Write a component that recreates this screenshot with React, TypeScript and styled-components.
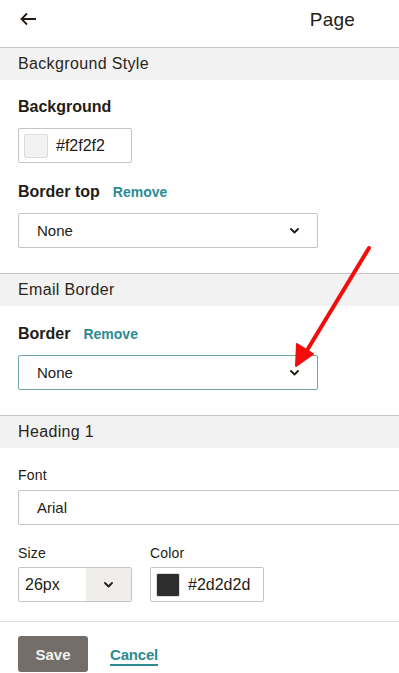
import * as React from "react";
import styled, { createGlobalStyle } from "styled-components";

const GlobalStyle = createGlobalStyle`
  html, body {
    margin: 0;
    padding: 0;
    background: #ffffff;
    overflow: hidden;
  }
  body {
    font-family: "Liberation Sans", Helvetica, Arial, sans-serif;
    color: #241c15;
  }
`;

const Page = styled.div`
  position: relative;
  width: 399px;
  height: 673px;
  overflow: hidden;
`;

const TopBar = styled.div`
  display: flex;
  align-items: center;
  height: 47px;
  padding: 0 44px 0 20px;
`;

const BackButton = styled.button`
  display: flex;
  align-items: center;
  padding: 0;
  border: 0;
  background: none;
  color: #241c15;
  cursor: pointer;
  margin-top: -10px;
`;

const Title = styled.div`
  margin-left: auto;
  margin-top: -8px;
  font-size: 19px;
  letter-spacing: 0.2px;
`;

const SectionHeader = styled.div`
  display: flex;
  align-items: center;
  height: 32px;
  padding: 0 18px;
  border-top: 1px solid #c6c6c6;
  background: #f2f2f2;
  font-size: 16px;
  letter-spacing: 0.35px;
  color: #2b2520;
`;

const SectionBody = styled.div<{ $top?: number; $bottom?: number; $gap?: number }>`
  display: flex;
  flex-direction: column;
  gap: ${(p) => p.$gap ?? 16}px;
  padding: ${(p) => p.$top ?? 15}px 18px ${(p) => p.$bottom ?? 25}px;
`;

const Field = styled.div<{ $gap?: number }>`
  display: flex;
  flex-direction: column;
  gap: ${(p) => p.$gap ?? 13}px;
`;

const LabelRow = styled.div`
  display: flex;
  align-items: baseline;
  gap: 13px;
  height: 20px;
`;

const FieldLabel = styled.div`
  font-size: 16px;
  font-weight: 700;
  line-height: 20px;
`;

const SmallLabel = styled.div`
  font-size: 14px;
  line-height: 18px;
  letter-spacing: 0.2px;
`;

const RemoveLink = styled.a`
  font-size: 14px;
  font-weight: 700;
  color: #2d8a93;
  cursor: pointer;
`;

const InputBox = styled.div<{ $width?: number; $focused?: boolean }>`
  display: flex;
  align-items: center;
  box-sizing: border-box;
  width: ${(p) => p.$width ?? 114}px;
  height: 35px;
  border: 1px solid ${(p) => (p.$focused ? "#6ea6ab" : "#c4c4c4")};
  border-radius: 2px;
  background: #ffffff;
  flex-shrink: 0;
`;

const Swatch = styled.span<{ $color: string }>`
  width: 22px;
  height: 22px;
  margin: 0 8px 0 5px;
  border: 1px solid #dcdcdc;
  border-radius: 2px;
  background: ${(p) => p.$color};
`;

const InputText = styled.span<{ $pad?: number; $size?: number }>`
  padding-left: ${(p) => p.$pad ?? 0}px;
  font-size: ${(p) => p.$size ?? 16}px;
  color: #241c15;
`;

const SelectArrow = styled.span`
  display: flex;
  margin-left: auto;
  margin-right: 18px;
`;

const StepperButton = styled.span`
  display: flex;
  align-items: center;
  justify-content: center;
  margin-left: auto;
  width: 45px;
  height: 100%;
  background: #efeeea;
`;

const Row = styled.div`
  display: flex;
  gap: 18px;
`;

const Footer = styled.div`
  display: flex;
  align-items: center;
  gap: 22px;
  padding: 14px 18px 0;
  border-top: 1px solid #dddddd;
`;

const SaveButton = styled.button`
  width: 70px;
  height: 36px;
  border: 0;
  border-radius: 3px;
  background: #736e69;
  color: #f4f3f1;
  font-family: inherit;
  font-size: 15px;
  font-weight: 700;
  cursor: pointer;
`;

const CancelLink = styled.a`
  font-size: 15px;
  font-weight: 700;
  color: #2d8a93;
  text-decoration: underline;
  text-underline-offset: 4px;
  text-decoration-thickness: 1.5px;
  letter-spacing: -0.2px;
  cursor: pointer;
`;

const Overlay = styled.svg`
  position: absolute;
  top: 0;
  left: 0;
  pointer-events: none;
`;

const Chevron = () => (
  <svg width="9" height="6" viewBox="0 0 9 6">
    <path d="M1 1 L4.5 4.5 L8 1" fill="none" stroke="#241c15" strokeWidth="1.8" strokeLinecap="round" strokeLinejoin="round" />
  </svg>
);

const BackArrow = () => (
  <svg width="17" height="14" viewBox="0 0 17 14">
    <path d="M1.5 7 H16 M7 1.5 L1.5 7 L7 12.5" fill="none" stroke="#241c15" strokeWidth="1.8" />
  </svg>
);

export default function App() {
  return (
    <>
      <GlobalStyle />
      <Page>
        <TopBar>
          <BackButton aria-label="Back">
            <BackArrow />
          </BackButton>
          <Title>Page</Title>
        </TopBar>

        <SectionHeader>Background Style</SectionHeader>
        <SectionBody $top={17} $gap={19}>
          <Field $gap={11}>
            <FieldLabel>Background</FieldLabel>
            <InputBox>
              <Swatch $color="#f2f2f2" />
              <InputText>#f2f2f2</InputText>
            </InputBox>
          </Field>
          <Field $gap={11}>
            <LabelRow>
              <FieldLabel>Border top</FieldLabel>
              <RemoveLink>Remove</RemoveLink>
            </LabelRow>
            <InputBox $width={300}>
              <InputText $pad={18} $size={15}>None</InputText>
              <SelectArrow>
                <Chevron />
              </SelectArrow>
            </InputBox>
          </Field>
        </SectionBody>

        <SectionHeader>Email Border</SectionHeader>
        <SectionBody $top={18}>
          <Field $gap={11}>
            <LabelRow>
              <FieldLabel>Border</FieldLabel>
              <RemoveLink>Remove</RemoveLink>
            </LabelRow>
            <InputBox $width={300} $focused>
              <InputText $pad={18} $size={15}>None</InputText>
              <SelectArrow>
                <Chevron />
              </SelectArrow>
            </InputBox>
          </Field>
        </SectionBody>

        <SectionHeader>Heading 1</SectionHeader>
        <SectionBody $top={18} $bottom={19} $gap={19}>
          <Field $gap={6}>
            <SmallLabel>Font</SmallLabel>
            <InputBox $width={420}>
              <InputText $pad={18} $size={15}>Arial</InputText>
            </InputBox>
          </Field>
          <Row>
            <Field $gap={5}>
              <SmallLabel>Size</SmallLabel>
              <InputBox>
                <InputText $pad={6}>26px</InputText>
                <StepperButton>
                  <Chevron />
                </StepperButton>
              </InputBox>
            </Field>
            <Field $gap={5}>
              <SmallLabel>Color</SmallLabel>
              <InputBox>
                <Swatch $color="#2d2d2d" />
                <InputText>#2d2d2d</InputText>
              </InputBox>
            </Field>
          </Row>
        </SectionBody>

        <Footer>
          <SaveButton>Save</SaveButton>
          <CancelLink>Cancel</CancelLink>
        </Footer>

        <Overlay width="399" height="673" viewBox="0 0 399 673">
          <line x1="369" y1="248" x2="306" y2="352" stroke="#f20c0c" strokeWidth="4" strokeLinecap="round" />
          <polygon points="296,366 297,344 313,354" fill="#f20c0c" stroke="#f20c0c" strokeWidth="2" strokeLinejoin="round" />
        </Overlay>
      </Page>
    </>
  );
}
